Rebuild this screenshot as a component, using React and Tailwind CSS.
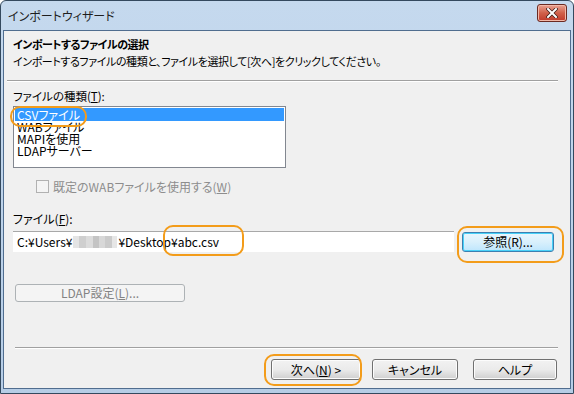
import React from "react";

const font = {
  fontFamily: '"Noto Sans CJK JP", "Noto Sans", sans-serif',
  fontFeatureSettings: '"palt"',
};

function Ring({ className }) {
  return (
    <div
      className={
        "pointer-events-none absolute rounded-[10px] border-[2.5px] border-[#f39c1a] " +
        className
      }
    />
  );
}

function Btn({ children, className = "", disabled = false, focus = false }) {
  return (
    <div
      className={
        "flex items-center justify-center rounded-[3px] border text-[12px] leading-none " +
        (disabled
          ? "border-[#adb2b5] bg-[#f4f4f4] text-[#838383] "
          : focus
          ? "border-[#3c7fb1] bg-gradient-to-b from-[#eaf6fd] via-[#d9f0fc] to-[#bee6fd] text-black shadow-[inset_0_0_0_1px_#48d1f8] "
          : "border-[#707070] bg-gradient-to-b from-[#f2f2f2] via-[#ebebeb] to-[#cfcfcf] text-black shadow-[inset_0_0_0_1px_#fcfcfc] ") +
        className
      }
    >
      {children}
    </div>
  );
}

export default function App() {
  return (
    <div
      style={font}
      className="relative flex h-[394px] w-[574px] flex-col overflow-hidden rounded-t-[6px] border border-[#34495e] bg-gradient-to-b from-[#c5d9ee] to-[#b6cde6] text-black"
    >
      {/* title bar */}
      <div className="flex h-[29px] shrink-0 items-center justify-between pl-[7px] pr-[6px]">
        <span className="text-[12px] leading-none text-[#1e1e1e]">インポートウィザード</span>
        <div className="mb-[6px] flex h-[18px] w-[30px] items-center justify-center rounded-[3px] border border-[#6b2a22] bg-gradient-to-b from-[#e8a192] via-[#d0604a] to-[#c0392b] shadow-[inset_0_0_0_1px_#f2b8a8]">
          <svg width="12" height="10" viewBox="0 0 12 10">
            <path d="M2 1 L10 9 M10 1 L2 9" stroke="#3a1a14" strokeWidth="3.4" strokeLinecap="square" />
            <path d="M2 1 L10 9 M10 1 L2 9" stroke="#ffffff" strokeWidth="2" strokeLinecap="square" />
          </svg>
        </div>
      </div>

      {/* client area */}
      <div className="relative mx-[2px] mb-[4px] flex flex-1 flex-col border border-[#506d8f] bg-[#f0f0f0]">
        {/* header */}
        <div className="pl-[9px] pt-[4px]">
          <div className="text-[11px] font-bold leading-[18px] tracking-[-0.5px]">インポートするファイルの選択</div>
          <div className="text-[11px] leading-[16px] tracking-[-0.4px]">
            インポートするファイルの種類と、ファイルを選択して[次へ]をクリックしてください。
          </div>
        </div>
        <div className="ml-[3px] mr-[12px] mt-[11px] h-[2px] border-t border-[#a0a0a0] border-b border-b-white" />

        {/* body */}
        <div className="flex flex-col pl-[9px] pt-[7px]">
          <div className="text-[11.5px] leading-[14px]">
            ファイルの種類(<span className="underline">T</span>):
          </div>
          <div className="relative mt-[3px] h-[62px] w-[273px] border border-[#828790] bg-white pt-[1px] pl-[1px] pr-[1px]">
            <div className="h-[13px] bg-[#3399ff] pl-[2px] text-[12px] leading-[13px] text-white">CSVファイル</div>
            <div className="h-[12px] pl-[2px] text-[12px] leading-[12px]">WABファイル</div>
            <div className="h-[12px] pl-[2px] text-[12px] leading-[12px]">MAPIを使用</div>
            <div className="h-[12px] pl-[2px] text-[12px] leading-[12px]">LDAPサーバー</div>
          </div>

          <div className="mt-[12px] flex items-center pl-[23px]">
            <div className="h-[13px] w-[13px] border border-[#b1b1b1] bg-[#f4f4f4]" />
            <span className="ml-[4px] text-[12px] leading-none text-[#8d8d8d]">
              既定のWABファイルを使用する(<span className="underline">W</span>)
            </span>
          </div>

          <div className="mt-[19px] text-[12px] leading-[14px]">
            ファイル(<span className="underline">F</span>):
          </div>
          <div className="mt-[5px] flex items-center">
            <div className="flex h-[21px] w-[441px] items-center border-t border-[#a8a8a8] bg-white pl-[4px] text-[12px] leading-none">
              <span>C:¥Users¥</span>
              <span className="mx-[1px] flex h-[12px]">
                <span className="w-[6px] bg-[#e4e4e4]" />
                <span className="w-[7px] bg-[#cfcfcf]" />
                <span className="w-[7px] bg-[#dcdcdc]" />
                <span className="w-[6px] bg-[#c4c4c4]" />
                <span className="w-[6px] bg-[#d8d8d8]" />
                <span className="w-[7px] bg-[#cbcbcb]" />
                <span className="w-[5px] bg-[#e6e6e6]" />
              </span>
              <span>¥Desktop¥abc.csv</span>
            </div>
            <Btn focus className="ml-[8px] h-[20px] w-[92px]">
              参照(R)...
            </Btn>
          </div>

          <Btn disabled className="ml-[2px] mt-[32px] h-[18px] w-[170px]">
            LDAP設定(<span className="underline">L</span>)...
          </Btn>
        </div>

        <div className="ml-[11px] mr-[12px] mt-[45px] h-[2px] border-t border-[#a0a0a0] border-b border-b-white" />

        <div className="mt-[10px] flex justify-end pr-[13px]">
          <Btn className="h-[21px] w-[90px]">
            次へ(<span className="underline">N</span>) &gt;
          </Btn>
          <Btn className="ml-[11px] h-[21px] w-[86px]">キャンセル</Btn>
          <Btn className="ml-[15px] h-[21px] w-[84px]">ヘルプ</Btn>
        </div>

        {/* highlight rings */}
        <Ring className="left-[6px] top-[75px] h-[21px] w-[77px]" />
        <Ring className="left-[159px] top-[194px] h-[31px] w-[81px]" />
        <Ring className="left-[453px] top-[195px] h-[37px] w-[107px]" />
        <Ring className="left-[260px] top-[323px] h-[32px] w-[98px]" />
      </div>
    </div>
  );
}
